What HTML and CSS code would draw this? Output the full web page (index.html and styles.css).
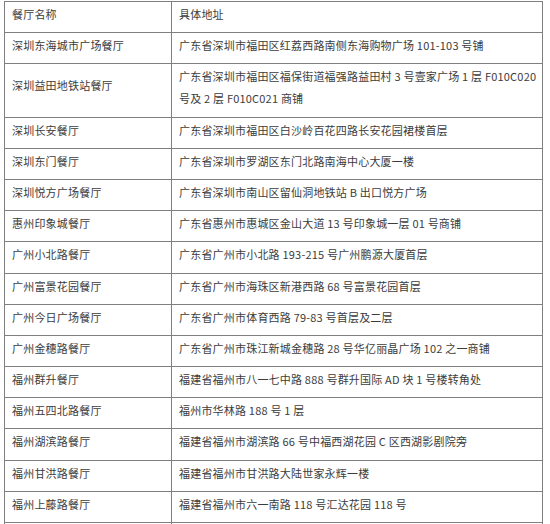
FILE: index.html
```html
<!DOCTYPE html>
<html lang="zh-CN">
<head>
<meta charset="utf-8">
<title>餐厅地址</title>
<link rel="stylesheet" href="styles.css">
</head>
<body>
<div class="page">
<table class="stores">
<colgroup><col class="col-name"><col class="col-addr"></colgroup>
<tr><td>餐厅名称</td><td>具体地址</td></tr>
<tr><td>深圳东海城市广场餐厅</td><td>广东省深圳市福田区红荔西路南侧东海购物广场 101-103 号铺</td></tr>
<tr class="tall"><td class="mid">深圳益田地铁站餐厅</td><td>广东省深圳市福田区福保街道福强路益田村 3 号壹家广场 1 层 F010C020<br>号及 2 层 F010C021 商铺</td></tr>
<tr><td>深圳长安餐厅</td><td>广东省深圳市福田区白沙岭百花四路长安花园裙楼首层</td></tr>
<tr><td>深圳东门餐厅</td><td>广东省深圳市罗湖区东门北路南海中心大厦一楼</td></tr>
<tr><td>深圳悦方广场餐厅</td><td>广东省深圳市南山区留仙洞地铁站 B 出口悦方广场</td></tr>
<tr><td>惠州印象城餐厅</td><td>广东省惠州市惠城区金山大道 13 号印象城一层 01 号商铺</td></tr>
<tr><td>广州小北路餐厅</td><td>广东省广州市小北路 193-215 号广州鹏源大厦首层</td></tr>
<tr><td>广州富景花园餐厅</td><td>广东省广州市海珠区新港西路 68 号富景花园首层</td></tr>
<tr><td>广州今日广场餐厅</td><td>广东省广州市体育西路 79-83 号首层及二层</td></tr>
<tr><td>广州金穗路餐厅</td><td>广东省广州市珠江新城金穗路 28 号华亿丽晶广场 102 之一商铺</td></tr>
<tr><td>福州群升餐厅</td><td>福建省福州市八一七中路 888 号群升国际 AD 块 1 号楼转角处</td></tr>
<tr><td>福州五四北路餐厅</td><td>福州市华林路 188 号 1 层</td></tr>
<tr><td>福州湖滨路餐厅</td><td>福建省福州市湖滨路 66 号中福西湖花园 C 区西湖影剧院旁</td></tr>
<tr><td>福州甘洪路餐厅</td><td>福建省福州市甘洪路大陆世家永辉一楼</td></tr>
<tr><td>福州上藤路餐厅</td><td>福建省福州市六一南路 118 号汇达花园 118 号</td></tr>
<tr><td>&nbsp;</td><td>&nbsp;</td></tr>
</table>
</div>
</body>
</html>
```

FILE: styles.css
```css
html, body {
  margin: 0;
  padding: 0;
  background: #ffffff;
}

.page {
  padding: 1px 0 0 4px;
}

.stores {
  border-collapse: collapse;
  width: 539px;
  table-layout: fixed;
  font-family: "Noto Sans CJK SC", "Microsoft YaHei", sans-serif;
  font-size: 11px;
  letter-spacing: 0.2px;
  color: #3c3c3c;
}

.col-name { width: 167px; }

.stores td {
  border: 1px solid #7f7f7f;
  padding: 1px 6px 7.2px 7px;
  line-height: 22px;
  vertical-align: top;
  white-space: nowrap;
}

.stores td.mid {
  vertical-align: middle;
  padding-bottom: 11px;
}
```
